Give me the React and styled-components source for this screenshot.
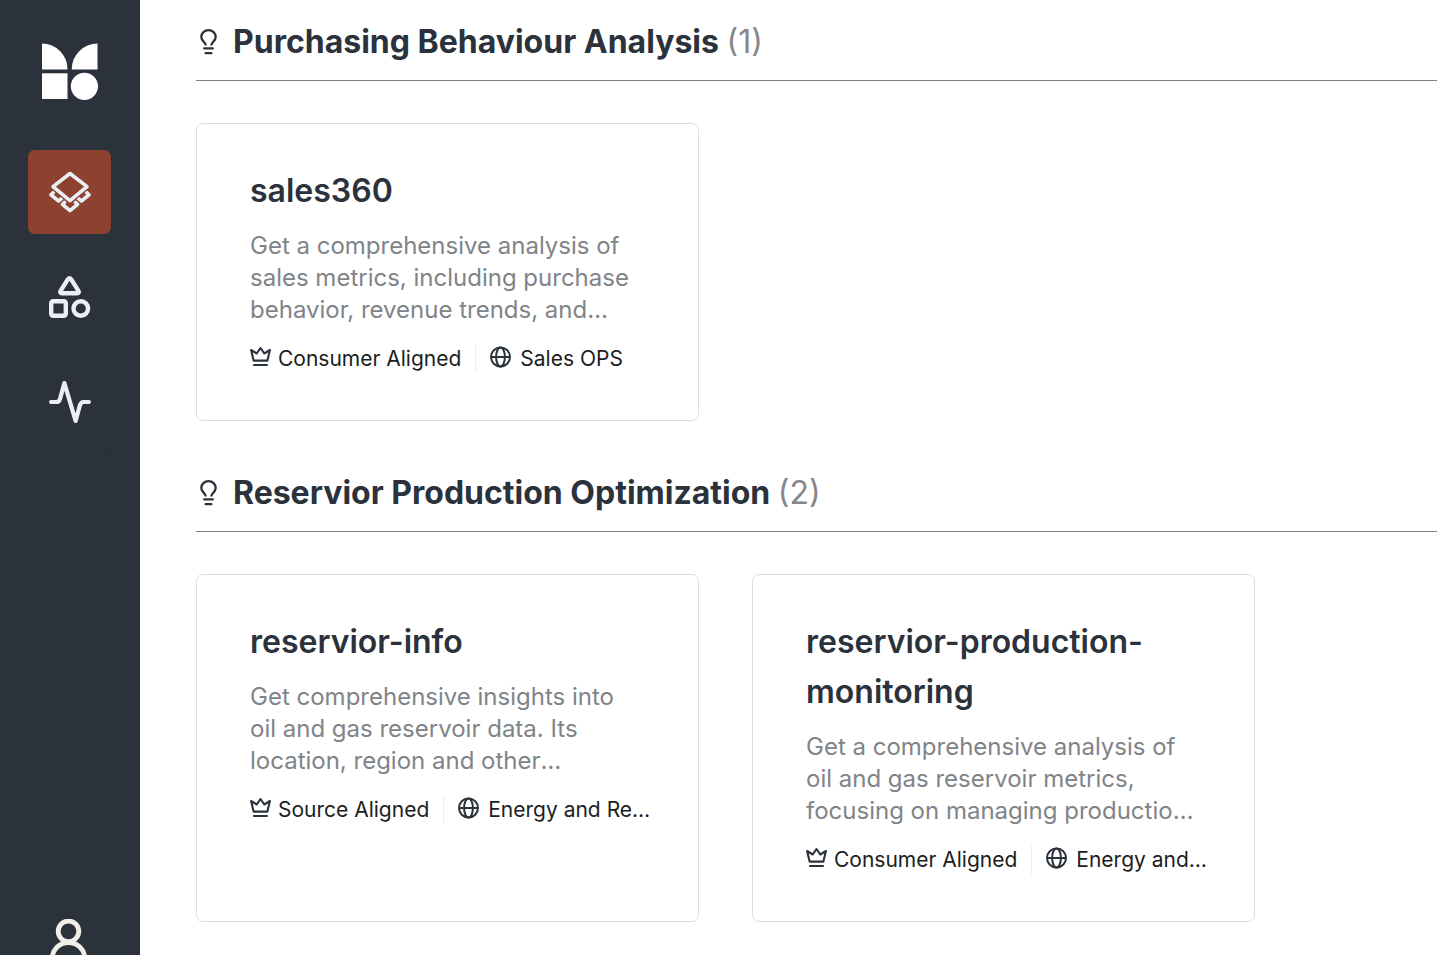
import React from "react";
import styled, { createGlobalStyle } from "styled-components";

const ink = "#2b323c";
const rust = "#8d4230";
const fontStack = 'Inter, "Liberation Sans", sans-serif';

const GlobalStyle = createGlobalStyle`
  *, *::before, *::after { box-sizing: border-box; }
  html, body { margin: 0; height: 100%; background: #fff; }
  body { overflow: hidden; font-family: ${fontStack}; color: ${ink}; }
  h2, h3, p, ul { margin: 0; padding: 0; }
  ul { list-style: none; }
`;

const Shell = styled.div`
  display: flex;
  height: calc(100vh + 60px);
`;

const Sidebar = styled.aside`
  display: flex;
  flex: none;
  flex-direction: column;
  justify-content: space-between;
  width: 140px;
  padding: 42px 29px 33px 28px;
  background: ${ink};
`;

const LogoLink = styled.a`
  display: block;
  margin: 0 13px 49px;
  height: 59px;
  color: #fff;
`;

const Nav = styled.nav`
  display: flex;
  flex-direction: column;
  gap: 21px;
  padding-bottom: 16px;
  border-radius: 7px;
  box-shadow: 1px 0 0 rgba(0, 0, 0, 0.06);
`;

const NavButton = styled.button`
  display: flex;
  align-items: center;
  justify-content: center;
  width: 83px;
  height: 84px;
  padding: 0;
  border: 0;
  border-radius: 7px;
  color: ${(p) => (p.$warm ? "#f1eee8" : "#ebeef5")};
  background: ${(p) => (p.$active ? rust : "transparent")};
  box-shadow: ${(p) => (p.$warm ? "1px 0 0 rgba(0, 0, 0, 0.06)" : "none")};
  cursor: pointer;
`;

const Main = styled.main`
  display: flex;
  flex: 1;
  flex-direction: column;
  gap: 47px;
  min-width: 0;
  padding: 17px 0 0 56px;
`;

const SectionHeader = styled.header`
  display: flex;
  align-items: center;
  gap: 12px;
  height: 64px;
  padding-bottom: 14px;
  border-bottom: 1px solid #808087;
`;

const SectionTitle = styled.h2`
  font-size: 32px;
  line-height: 50px;
  font-weight: 700;
`;

const Count = styled.span`
  font-weight: 400;
  color: #85878a;
`;

const CardGrid = styled.ul`
  display: grid;
  grid-template-columns: repeat(auto-fill, 503px);
  gap: 53px;
  padding-top: 42px;
`;

const Card = styled.li`
  padding: 42px 44px 47px 53px;
  border: 1px solid #dcdddd;
  border-radius: 7px;
`;

const CardTitle = styled.h3`
  margin-bottom: 14px;
  font-size: 32px;
  line-height: 50px;
  font-weight: 600;
`;

const Description = styled.p`
  display: -webkit-box;
  overflow: hidden;
  -webkit-box-orient: vertical;
  -webkit-line-clamp: 3;
  margin-right: 9px;
  font-size: 24px;
  line-height: 32px;
  color: #808488;
`;

const Meta = styled.div`
  display: flex;
  align-items: center;
  margin-top: 19px;
  font-size: 21px;
  line-height: 28px;
  color: #1c1e21;
`;

const MetaItem = styled.span`
  display: flex;
  gap: ${(p) => (p.$shrink ? "8px" : "7px")};
  flex: ${(p) => (p.$shrink ? "0 1 auto" : "none")};
  min-width: 0;
  & > svg { flex: none; margin-top: 1px; color: ${ink}; }
`;

const MetaText = styled.span`
  overflow: hidden;
  text-overflow: ellipsis;
  white-space: nowrap;
`;

const Divider = styled.span`
  flex: none;
  width: 1px;
  height: 28px;
  margin: 0 14px;
  background: #ebecee;
`;

const Logo = () => (
  <svg width="57" height="59" viewBox="0 0 57 59" fill="currentColor" aria-hidden="true">
    <path d="M1 1.5A25.5 25.5 0 0 1 26.5 27.5H1Z" />
    <path d="M56.5 1.5A25.8 25.8 0 0 0 30.7 27.5H56.5Z" />
    <path d="M1 31.3H26.5V57H1Z" />
    <circle cx="43.4" cy="44.3" r="13.6" />
  </svg>
);

const ProductsIcon = () => (
  <svg width="42" height="42" viewBox="0 0 42 42" fill="none" stroke="currentColor"
    strokeWidth="3.6" strokeLinejoin="round" strokeLinecap="round" aria-hidden="true">
    <path d="M4.4 21.4 2 23.8 9.6 30 12.4 27.6" />
    <path d="M37.6 21.4 40 23.8 32.4 30 29.6 27.6" />
    <path d="M15.6 31.4 13.4 33.4 21 39.6 28.6 33.4 26.4 31.4" />
    <path d="M21 2.5 38 15.7 21 29.7 4 15.7Z" stroke={rust} strokeWidth="6" />
    <path d="M21 2.5 38 15.7 21 29.7 4 15.7Z" />
  </svg>
);

const ShapesIcon = () => (
  <svg width="42" height="42" viewBox="0 0 42 42" fill="none" stroke="currentColor"
    strokeWidth="4.4" strokeLinejoin="round" aria-hidden="true">
    <path d="M18.8 3.4 11.7 14.6Q10.4 17.2 13 17.2H28Q30.6 17.2 29.3 14.6L22.2 3.4Q20.5 1 18.8 3.4Z" />
    <rect x="2.2" y="25.2" width="14.6" height="14.6" rx="2" />
    <circle cx="31.8" cy="32.5" r="7.3" />
  </svg>
);

const ActivityIcon = () => (
  <svg width="42" height="42" viewBox="0 0 24 24" fill="none" stroke="currentColor"
    strokeWidth="2.4" strokeLinecap="round" strokeLinejoin="round" aria-hidden="true">
    <path d="M1.2 12H4.2Q5.8 12 6.3 10.2L8.8 1.2 15.2 22.8 17.7 13.8Q18.2 12 19.8 12H22.8" />
  </svg>
);

const UserIcon = () => (
  <svg width="42" height="42" viewBox="0 0 42 42" fill="none" stroke="currentColor"
    strokeWidth="4.8" strokeLinecap="round" aria-hidden="true">
    <circle cx="19.5" cy="12.3" r="10.3" />
    <path d="M3 41C3 30 10.5 23.7 19.5 23.7S36 30 36 41" />
  </svg>
);

const BulbIcon = () => (
  <svg width="25" height="26" viewBox="0 0 25 26" fill="none" stroke="currentColor"
    strokeWidth="2.3" aria-hidden="true">
    <path d="M9.8 16.5C9.8 13.2 5.3 12 5.3 8A7.2 6.8 0 0 1 19.7 8C19.7 12 15.2 13.2 15.2 16.5" />
    <path d="M8.2 19.4H16.8M9.6 24.2H15.4" strokeLinecap="round" />
  </svg>
);

const CrownIcon = () => (
  <svg width="21" height="21" viewBox="0 0 21 21" fill="none" stroke="currentColor"
    strokeWidth="2.1" strokeLinejoin="round" strokeLinecap="round" aria-hidden="true">
    <path d="M1.1 4 3.6 14.6H17.4L19.9 4 14.3 7.5 10.5 2 6.7 7.5Z" />
    <path d="M4 19H17" />
  </svg>
);

const GlobeIcon = () => (
  <svg width="22" height="22" viewBox="0 0 22 22" fill="none" stroke="currentColor"
    strokeWidth="2" aria-hidden="true">
    <circle cx="10.5" cy="11" r="9.5" />
    <ellipse cx="10.5" cy="11" rx="4.4" ry="9.5" />
    <path d="M1 11H20" />
  </svg>
);

const sections = [
  {
    title: "Purchasing Behaviour Analysis",
    cards: [
      {
        name: "sales360",
        text: "Get a comprehensive analysis of sales metrics, including purchase behavior, revenue trends, and performance.",
        kind: "Consumer Aligned",
        domain: "Sales OPS",
      },
    ],
  },
  {
    title: "Reservior Production Optimization",
    cards: [
      {
        name: "reservior-info",
        text: "Get comprehensive insights into oil and gas reservoir data. Its location, region and other characteristics.",
        kind: "Source Aligned",
        domain: "Energy and Resources",
      },
      {
        name: "reservior-production-monitoring",
        text: "Get a comprehensive analysis of oil and gas reservoir metrics, focusing on managing production rates.",
        kind: "Consumer Aligned",
        domain: "Energy and Resources",
      },
    ],
  },
];

const ProductCard = ({ name, text, kind, domain }) => (
  <Card>
    <CardTitle>{name}</CardTitle>
    <Description>{text}</Description>
    <Meta>
      <MetaItem><CrownIcon /><MetaText>{kind}</MetaText></MetaItem>
      <Divider />
      <MetaItem $shrink><GlobeIcon /><MetaText>{domain}</MetaText></MetaItem>
    </Meta>
  </Card>
);

export default function App() {
  return (
    <>
      <GlobalStyle />
      <Shell>
        <Sidebar>
          <div>
            <LogoLink href="#" aria-label="Home"><Logo /></LogoLink>
            <Nav aria-label="Primary">
              <NavButton $active aria-label="Data products" aria-current="page"><ProductsIcon /></NavButton>
              <NavButton aria-label="Domains"><ShapesIcon /></NavButton>
              <NavButton aria-label="Activity"><ActivityIcon /></NavButton>
            </Nav>
          </div>
          <NavButton $warm aria-label="Account"><UserIcon /></NavButton>
        </Sidebar>
        <Main>
          {sections.map((s) => (
            <section key={s.title}>
              <SectionHeader>
                <BulbIcon />
                <SectionTitle>{s.title} <Count>({s.cards.length})</Count></SectionTitle>
              </SectionHeader>
              <CardGrid>
                {s.cards.map((c) => <ProductCard key={c.name} {...c} />)}
              </CardGrid>
            </section>
          ))}
        </Main>
      </Shell>
    </>
  );
}
